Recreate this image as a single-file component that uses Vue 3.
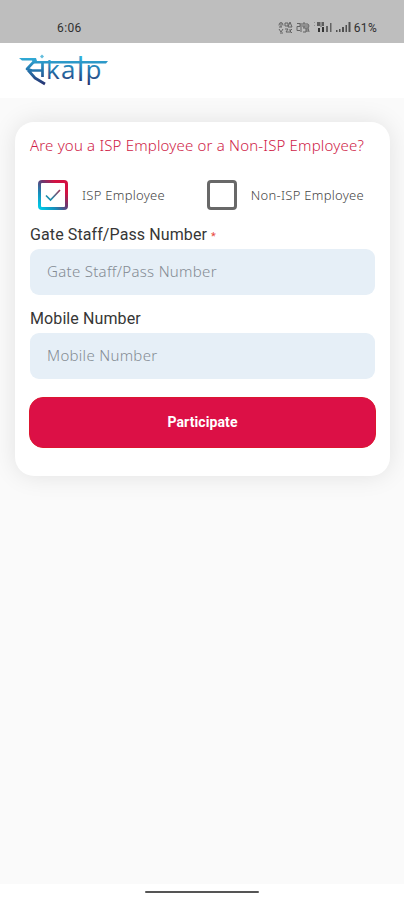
<script setup>
import { ref } from 'vue'

const employeeType = ref('isp')
const staffNumber = ref('')
const mobileNumber = ref('')
</script>

<template>
  <div class="screen">
    <div class="status">
      <span class="time">6:06</span>
      <div class="indicators">
        <svg class="signals" width="73" height="14" viewBox="0 0 73 14" aria-hidden="true">
          <g fill="none" stroke="#333" stroke-width="1" opacity=".65">
            <path d="M1 4.5q0-3 2-3t2 3M3 2v4M1 6h3M1 8l2 3 2-3M2 12h3M7 2h3v3H7zM12 1l-2 5h4zM7 8h3l-2 3h3M12 8v4M14 8l-2 2 2 2" />
            <path d="M19 2.500h3v3h-3v4h3M23 2v9M25 2h2v4h-2zM25 7h3v4h-3M29 2v9M30 3l1 2-1 2 1 4" />
          </g>
          <g fill="#333">
            <path opacity=".3" d="M36 1h1v1h-1zM36 4h1v1h-1z" />
            <path opacity=".7" d="M39 1h3v4h-3zM42.500 1h1v5h-1zM44 1h2v4h-2z" />
            <path d="M40 7h2v4h-2zM44 6h2v5h-2z" />
            <path opacity=".65" d="M48 5h2v6h-2zM52 2h1.500v9H52z" />
            <path opacity=".8" d="M58 9h1.500v2H58zM61 8h1.500v3H61zM64 6h2v5h-2zM67.500 4h1.500v7h-1.500zM70.500 1h2v10h-2z" />
          </g>
        </svg>
        <span class="battery">61%</span>
      </div>
    </div>

    <header class="header">
      <svg class="logo" width="92" height="40" viewBox="0 0 92 40" role="img" aria-label="Sankalp">
        <defs>
          <linearGradient id="ink" gradientUnits="userSpaceOnUse" x1="0" y1="3" x2="0" y2="31">
            <stop offset="0" stop-color="#32b0da" />
            <stop offset=".45" stop-color="#2578b0" />
            <stop offset="1" stop-color="#26306f" />
          </linearGradient>
        </defs>
        <path fill="url(#ink)" d="M1 4h17l1 3h71l-2 2.500H16L14 6.500H4z" />
        <path fill="none" stroke="url(#ink)" stroke-width="2.700" stroke-linejoin="round" d="M17 6.500 9 15l5 1.500h10M10 16l7 8 10 6M24.500 7v16" />
        <path fill="#62bddd" d="m24 .5 2 2-2 2-2-2z" />
        <text class="wordmark" y="24.500" fill="url(#ink)"><tspan x="28">k</tspan><tspan x="43">a</tspan><tspan class="tall" x="58.500" y="27">l</tspan><tspan x="67.500" y="24.500">p</tspan></text>
      </svg>
    </header>

    <main class="content">
      <form class="card" @submit.prevent>
        <h1 class="question">Are you a ISP Employee or a Non-ISP Employee?</h1>

        <div class="choices">
          <button type="button" class="choice" @click="employeeType = 'isp'">
            <span class="box" :class="{ checked: employeeType === 'isp' }">
              <svg v-if="employeeType === 'isp'" width="18" height="16" viewBox="0 0 18 16">
                <defs>
                  <linearGradient id="tick" x1="0" y1="1" x2="1" y2="0">
                    <stop offset=".2" stop-color="#198fae" />
                    <stop offset="1" stop-color="#9d3457" />
                  </linearGradient>
                </defs>
                <path d="m2 8.500 4.500 4.500L16 3" />
              </svg>
            </span>
            <span class="choice-text isp">ISP Employee</span>
          </button>
          <button type="button" class="choice" @click="employeeType = 'non'">
            <span class="box" :class="{ checked: employeeType === 'non' }">
              <svg v-if="employeeType === 'non'" width="18" height="16" viewBox="0 0 18 16">
                <path class="plain" d="m2 8.500 4.500 4.500L16 3" />
              </svg>
            </span>
            <span class="choice-text non">Non-ISP Employee</span>
          </button>
        </div>

        <label class="label" for="staff">Gate Staff/Pass Number <span class="required">*</span></label>
        <input id="staff" v-model="staffNumber" class="field" placeholder="Gate Staff/Pass Number" />
        <label class="label" for="mobile">Mobile Number</label>
        <input id="mobile" v-model="mobileNumber" class="field" placeholder="Mobile Number" />
        <button type="submit" class="submit">Participate</button>
      </form>
    </main>
    <footer class="gesture"><span></span></footer>
  </div>
</template>

<style>
body {
  background: #fff;
}
</style>

<style scoped>
* {
  box-sizing: border-box;
}
.screen {
  width: 404px;
  height: 900px;
  display: flex;
  flex-direction: column;
  overflow: hidden;
  font-family: Roboto, sans-serif;
  background: #fff;
}
.status {
  height: 43px;
  flex: none;
  padding: 13px 27px 0 57px;
  display: flex;
  justify-content: space-between;
  align-items: center;
  background: #bebebe;
  color: #303030;
  font-size: 12px;
}
.time {
  letter-spacing: .4px;
}
.indicators {
  display: flex;
  align-items: center;
  gap: 3px;
}
.battery {
  letter-spacing: .3px;
}
.header {
  height: 55px;
  flex: none;
  padding: 11px 18px 0;
  background: #fff;
}
.logo {
  display: block;
  overflow: visible;
}
.wordmark {
  font: 500 26px "Open Sans", sans-serif;
}
.tall {
  font-size: 32px;
}
.content {
  flex: 1;
  padding: 24px 14px 0 15px;
  background: #fafafa;
}
.card {
  height: 354px;
  padding: 13px 15px 0;
  display: flex;
  flex-direction: column;
  border-radius: 19px;
  background: #fff;
  box-shadow: 0 0 24px rgba(0, 0, 0, .1);
}
.question {
  height: 21px;
  margin: 0;
  font: 300 15px/21px "Noto Sans", sans-serif;
  letter-spacing: .18px;
  color: #cf1c48;
  white-space: nowrap;
}
.choices {
  height: 30px;
  margin: 24px 0 14px;
  padding: 0 11px 0 8px;
  display: flex;
  justify-content: space-between;
}
.choice {
  padding: 0;
  display: flex;
  align-items: center;
  gap: 14px;
  border: 0;
  background: none;
}
.box {
  width: 30px;
  height: 30px;
  flex: none;
  display: flex;
  align-items: center;
  justify-content: center;
  border: 3px solid #686868;
  border-radius: 4px;
}
.box.checked {
  border-color: transparent;
  background: linear-gradient(#fff, #fff) padding-box, linear-gradient(45deg, #00c7e5 8%, #168fbc 30%, #653b73 53%, #d31142 76%) border-box;
}
.box path {
  fill: none;
  stroke: url(#tick);
  stroke-width: 1.7;
}
.box path.plain {
  stroke: #39708e;
}
.choice-text {
  font: 300 13px/20px "Noto Sans", sans-serif;
  letter-spacing: .28px;
  color: #454545;
  white-space: nowrap;
}
.label {
  height: 25px;
  font-size: 16px;
  line-height: 22px;
  letter-spacing: .1px;
  color: #363636;
}
.required {
  color: #e8483e;
  font-size: 11px;
}
.field {
  height: 46px;
  flex: none;
  margin: 0 0 13px;
  padding: 0 17px 2px;
  border: 0;
  border-radius: 9px;
  outline: none;
  background: #e6eff7;
  font: 300 15px "Noto Sans", sans-serif;
  letter-spacing: .3px;
  color: #303030;
}
.field::placeholder {
  color: #848b93;
  opacity: 1;
}
.submit {
  height: 51px;
  flex: none;
  margin: 5px -1px 0;
  padding: 0 0 2px;
  border: 1px solid #dc1630;
  border-radius: 14px;
  background: #dc1046;
  color: #fff;
  font: 700 14px Roboto, sans-serif;
  letter-spacing: .1px;
}
.gesture {
  height: 16px;
  flex: none;
  display: flex;
  justify-content: center;
  padding-top: 7px;
}
.gesture span {
  width: 114px;
  height: 2px;
  border-radius: 1px;
  background: #555;
}
</style>
